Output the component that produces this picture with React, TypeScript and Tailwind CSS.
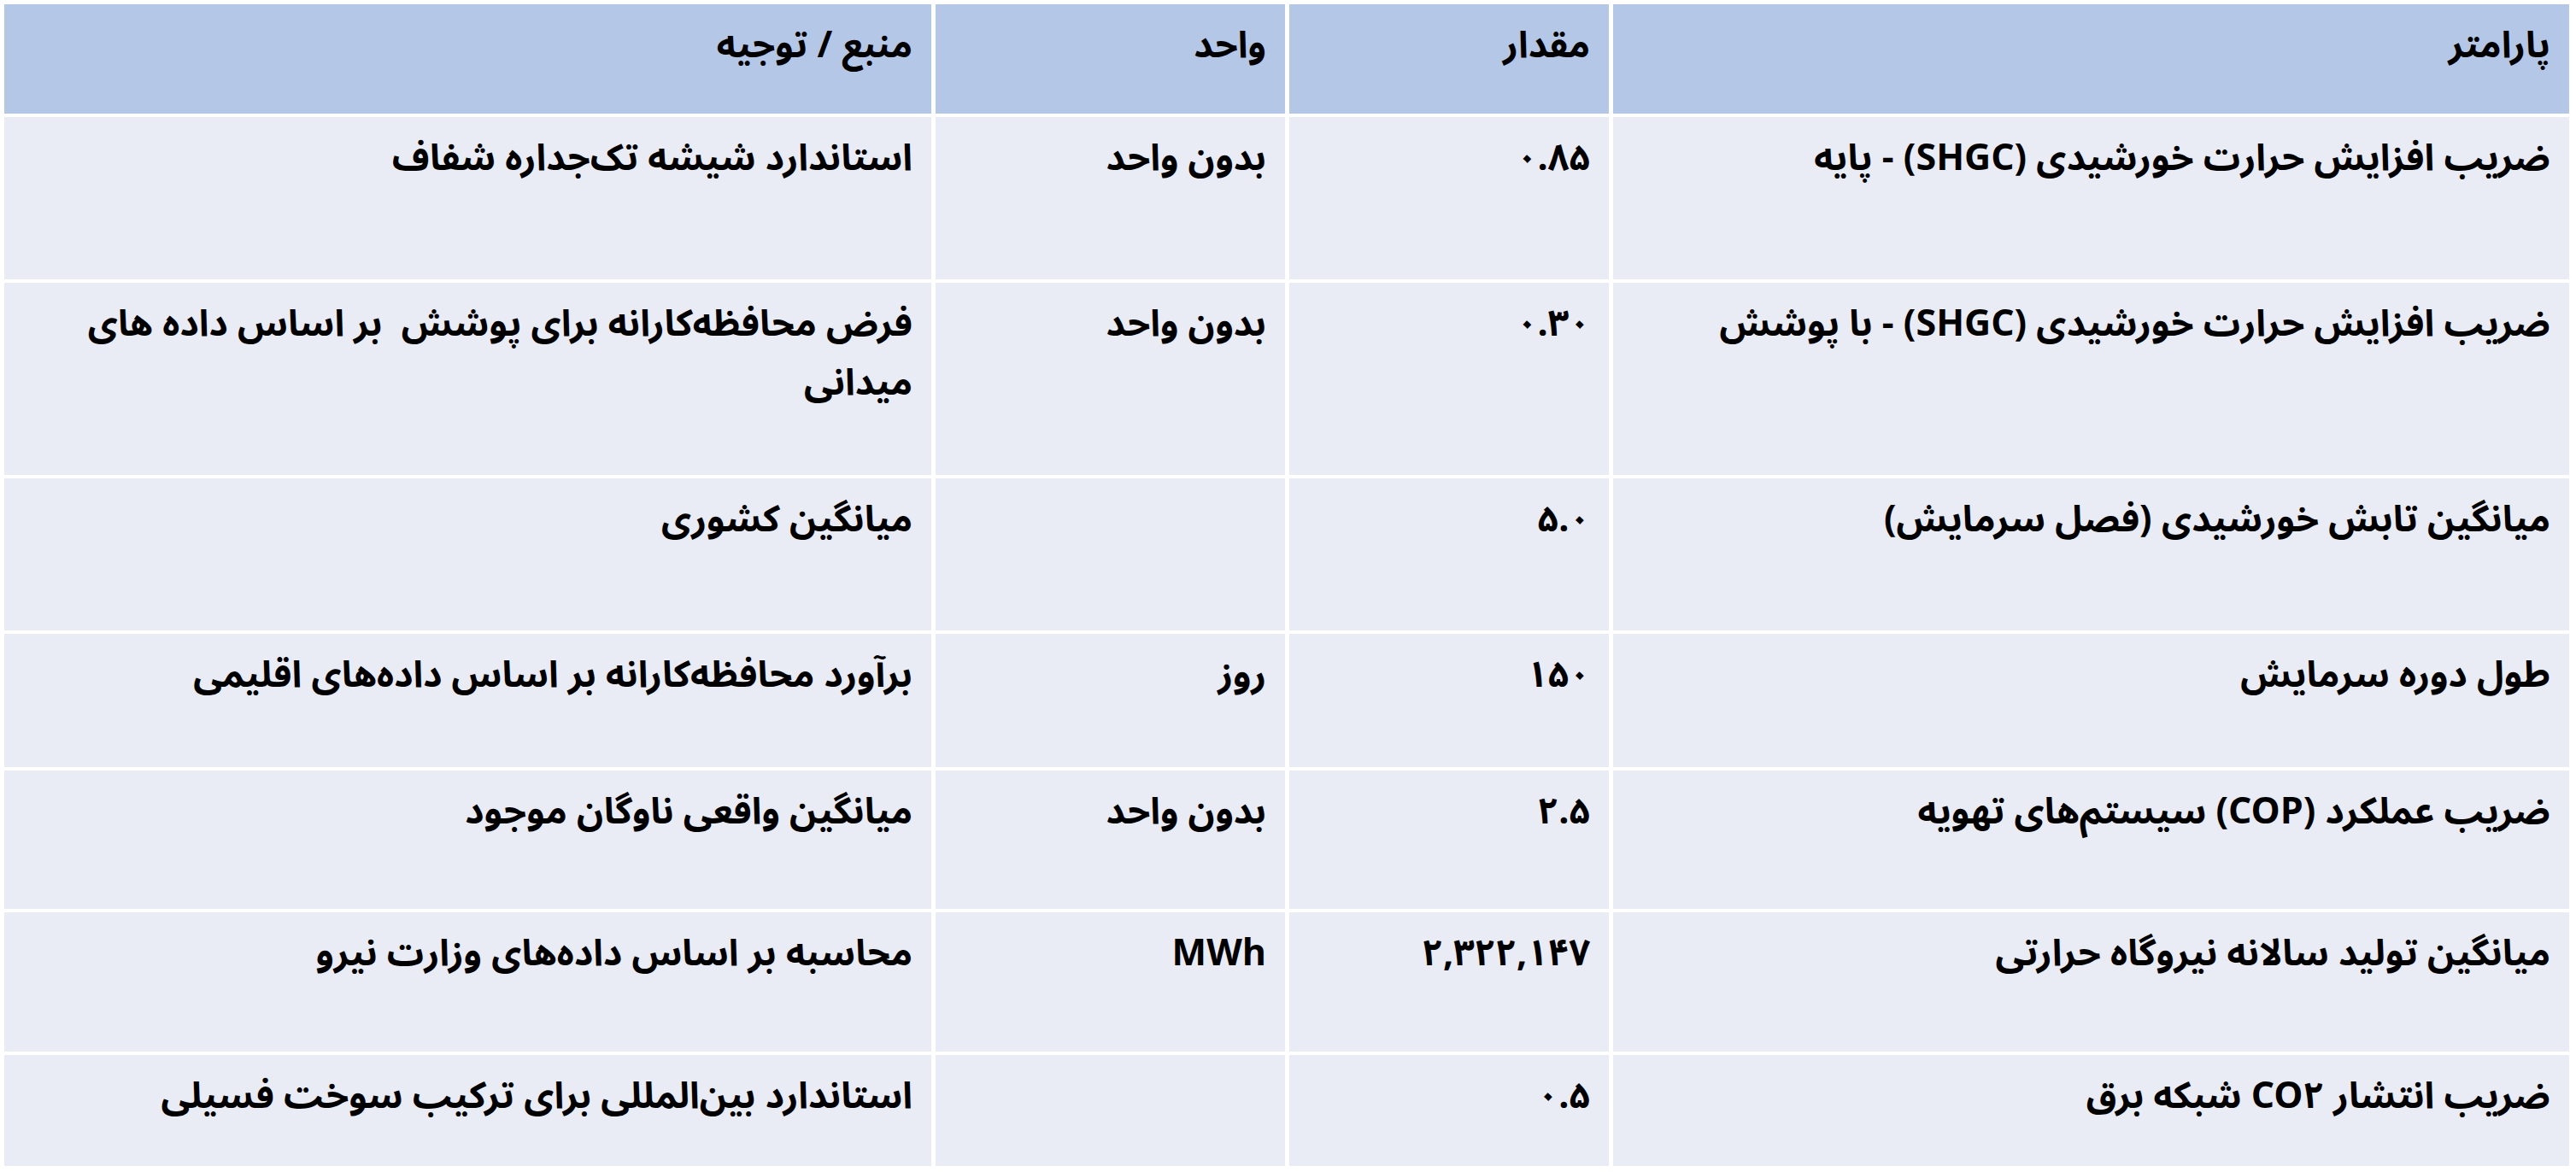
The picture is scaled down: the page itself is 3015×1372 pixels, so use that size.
import React from "react";

type Row = { p: string; v: string; u: string; s: string; h: string };

const rows: Row[] = [
  { p: "ضریب افزایش حرارت خورشیدی (SHGC) - پایه", v: "۰.۸۵", u: "بدون واحد", s: "استاندارد شیشه تک‌جداره شفاف", h: "h-[190px]" },
  { p: "ضریب افزایش حرارت خورشیدی (SHGC) - با پوشش", v: "۰.۳۰", u: "بدون واحد", s: "فرض محافظه‌کارانه برای پوشش  بر اساس داده های میدانی", h: "h-[225px]" },
  { p: "میانگین تابش خورشیدی (فصل سرمایش)", v: "۵.۰", u: "", s: "میانگین کشوری", h: "h-[178px]" },
  { p: "طول دوره سرمایش", v: "۱۵۰", u: "روز", s: "برآورد محافظه‌کارانه بر اساس داده‌های اقلیمی", h: "h-[156px]" },
  { p: "ضریب عملکرد (COP) سیستم‌های تهویه", v: "۲.۵", u: "بدون واحد", s: "میانگین واقعی ناوگان موجود", h: "h-[162px]" },
  { p: "میانگین تولید سالانه نیروگاه حرارتی", v: "۲,۳۲۲,۱۴۷", u: "MWh", s: "محاسبه بر اساس داده‌های وزارت نیرو", h: "h-[163px]" },
  { p: "ضریب انتشار CO۲ شبکه برق", v: "۰.۵", u: "", s: "استاندارد بین‌المللی برای ترکیب سوخت فسیلی", h: "h-[130px]" },
];

const cell = "px-[22px] pt-[15px] text-right text-black font-bold text-[43px] leading-[1.6] whitespace-pre-wrap";

export default function App() {
  return (
    <div
      className="w-[3015px] h-[1372px] bg-white pl-[5px] pt-[5px]"
      style={{ fontFamily: '"Noto Sans Arabic", "Noto Naskh Arabic", "DejaVu Sans", sans-serif' }}
    >
      <div dir="rtl" className="grid grid-cols-[1119px_374px_409px_1085px] gap-x-[5px] gap-y-[4px] w-[3002px]">
        <div className={`${cell} bg-[#b4c7e7] h-[128px]`}>پارامتر</div>
        <div className={`${cell} bg-[#b4c7e7] h-[128px]`}>مقدار</div>
        <div className={`${cell} bg-[#b4c7e7] h-[128px]`}>واحد</div>
        <div className={`${cell} bg-[#b4c7e7] h-[128px]`}>منبع / توجیه</div>
        {rows.map((r, i) => (
          <React.Fragment key={i}>
            <div className={`${cell} bg-[#e9ebf5] ${r.h}`}>{r.p}</div>
            <div className={`${cell} bg-[#e9ebf5] ${r.h}`}>{r.v}</div>
            <div className={`${cell} bg-[#e9ebf5] ${r.h}`}>{r.u}</div>
            <div className={`${cell} bg-[#e9ebf5] ${r.h}`}>{r.s}</div>
          </React.Fragment>
        ))}
      </div>
    </div>
  );
}
